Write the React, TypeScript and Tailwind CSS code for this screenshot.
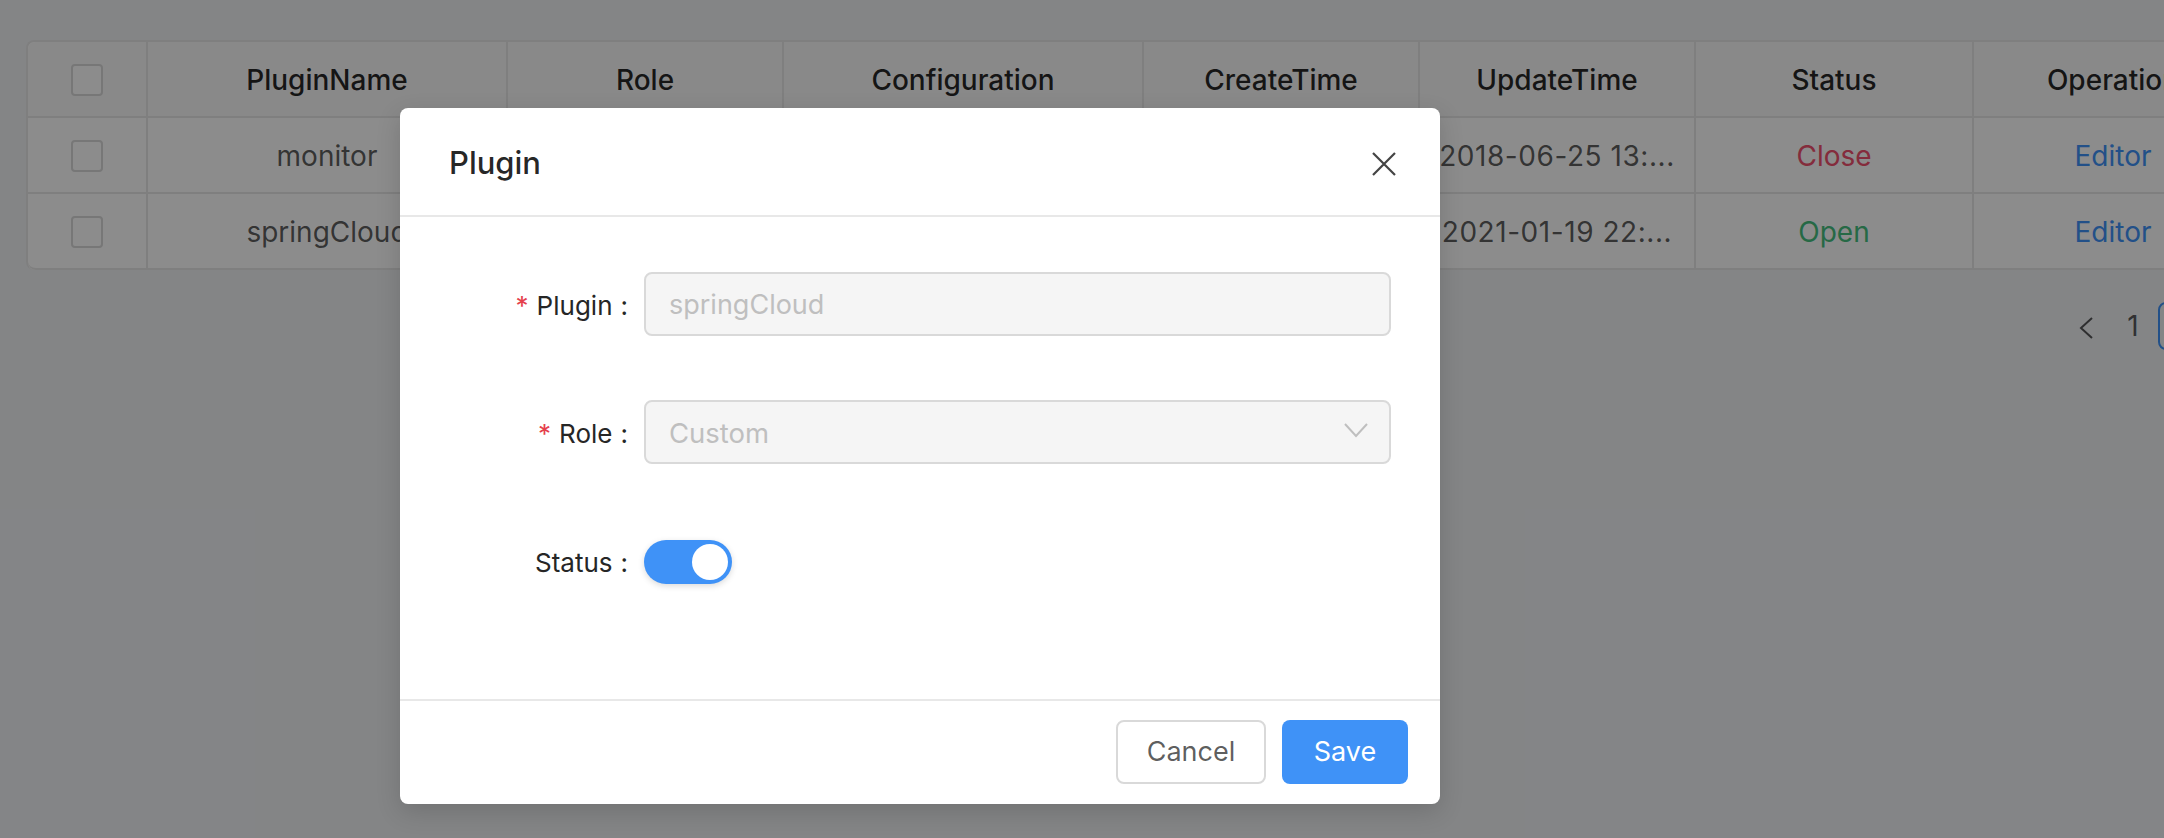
const font = { fontFamily: "Inter, 'Noto Sans', sans-serif" };

const rows = [
  {
    name: "monitor",
    role: "Custom",
    config: "{...}",
    created: "2018-06-25 13:...",
    updated: "2018-06-25 13:...",
    open: false,
  },
  {
    name: "springCloud",
    role: "Custom",
    config: "{...}",
    created: "2018-06-25 13:...",
    updated: "2021-01-19 22:...",
    open: true,
  },
];

function Checkbox() {
  return <span className="block size-8 mx-auto rounded-[4px] border-2 border-[#d9d9d9] bg-white" />;
}

function FormRow({ label, required, children }: { label: string; required?: boolean; children: React.ReactNode }) {
  return (
    <div className="flex items-center h-16">
      <label
        className={`w-[244px] flex justify-end items-center text-[26px] text-[#262626] shrink-0 ${required ? "pt-[3px]" : ""}`}
      >
        {required ? <span className="text-[#e5404c] mr-2">*</span> : null}
        {label}
        <span className="ml-2 mr-4">:</span>
      </label>
      {children}
    </div>
  );
}

export default function App() {
  return (
    <div className="relative w-[2164px] h-[838px] overflow-hidden bg-[#f0f2f5]" style={font}>
      <div className="pt-10 pl-[26px]">
        <table className="w-[2227px] table-fixed border-separate border-spacing-0 bg-white rounded-lg text-[28px] text-black/65 border-t-2 border-l-2 border-[#e8e8e8]">
          <colgroup>
            <col className="w-[120px]" />
            <col className="w-[360px]" />
            <col className="w-[276px]" />
            <col className="w-[360px]" />
            <col className="w-[276px]" />
            <col className="w-[276px]" />
            <col className="w-[278px]" />
            <col className="w-[280px]" />
          </colgroup>
          <thead>
            <tr className="h-[76px] bg-[#fafafa] text-black/85">
              <th className="rounded-tl-lg pt-[2px] border-r-2 border-b-2 border-[#e8e8e8]">
                <Checkbox />
              </th>
              {["PluginName", "Role", "Configuration", "CreateTime", "UpdateTime", "Status", "Operation"].map((h) => (
                <th key={h} className="font-medium pt-[2px] whitespace-nowrap border-r-2 border-b-2 border-[#e8e8e8]">
                  {h}
                </th>
              ))}
            </tr>
          </thead>
          <tbody>
            {rows.map((r, i) => (
              <tr key={r.name} className="h-[76px] text-center">
                <td className={`pt-[2px] border-r-2 border-b-2 border-[#e8e8e8] ${i === 1 ? "rounded-bl-lg" : ""}`}>
                  <Checkbox />
                </td>
                <td className="pt-[2px] border-r-2 border-b-2 border-[#e8e8e8]">{r.name}</td>
                <td className="pt-[2px] border-r-2 border-b-2 border-[#e8e8e8]">{r.role}</td>
                <td className="pt-[2px] border-r-2 border-b-2 border-[#e8e8e8]">{r.config}</td>
                <td className="pt-[2px] tracking-[0.55px] border-r-2 border-b-2 border-[#e8e8e8]">{r.created}</td>
                <td className="pt-[2px] tracking-[0.55px] whitespace-nowrap border-r-2 border-b-2 border-[#e8e8e8]">
                  {r.updated}
                </td>
                <td
                  className={`pt-[2px] border-r-2 border-b-2 border-[#e8e8e8] ${r.open ? "text-[#45c07f]" : "text-[#f0506e]"}`}
                >
                  {r.open ? "Open" : "Close"}
                </td>
                <td className="pt-[2px] border-r-2 border-b-2 border-[#e8e8e8] text-[#3f92f7]">Editor</td>
              </tr>
            ))}
          </tbody>
        </table>
        <div className="flex items-center mt-8 ml-[2053px] text-[28px] text-black/65">
          <svg width="14" height="22" viewBox="0 0 14 22" className="shrink-0 mt-1">
            <path d="M13 1 L2 11 L13 21" stroke="currentColor" strokeWidth="2" fill="none" />
          </svg>
          <span className="ml-[30px] w-5 shrink-0 text-center">1</span>
          <span className="ml-[15px] h-12 w-12 shrink-0 rounded-lg border-2 border-[#3f92f7]" />
        </div>
      </div>

      <div className="absolute inset-0 bg-black/45" />

      <div className="absolute left-[400px] top-[108px] w-[1040px] h-[696px] flex flex-col bg-white rounded-lg shadow-[0_8px_24px_rgba(0,0,0,0.15)]">
        <div className="h-[109px] shrink-0 flex items-center justify-between pt-1 pl-[49px] pr-[44px] border-b-2 border-[#e8e8e8]">
          <span className="text-[31px] font-medium text-black/85">Plugin</span>
          <svg width="24" height="24" viewBox="0 0 24 24" className="text-[#444]">
            <path d="M1 1 L23 23 M23 1 L1 23" stroke="currentColor" strokeWidth="2.2" fill="none" />
          </svg>
        </div>
        <div className="flex-1 flex flex-col pt-[55px]">
          <FormRow label="Plugin" required>
            <div className="w-[747px] h-16 flex items-center pl-[23px] pt-[3px] rounded-lg border-2 border-[#d9d9d9] bg-[#f5f5f5] text-[27px] text-[#bfbfbf]">
              springCloud
            </div>
          </FormRow>
          <div className="mt-16">
            <FormRow label="Role" required>
              <div className="w-[747px] h-16 flex items-center justify-between pl-[23px] pr-[21px] rounded-lg border-2 border-[#d9d9d9] bg-[#f5f5f5] text-[27.5px] text-[#bfbfbf]">
                <span className="pt-[3px]">Custom</span>
                <svg width="24" height="15" viewBox="0 0 24 15" className="mb-[3px]">
                  <path d="M1 1 L12 13 L23 1" stroke="currentColor" strokeWidth="2" fill="none" />
                </svg>
              </div>
            </FormRow>
          </div>
          <div className="mt-[66px]">
            <FormRow label="Status">
              <span className="flex justify-end items-center w-[88px] h-11 p-1 rounded-full bg-[#3f92f7] shadow-[0_2px_6px_rgba(0,0,0,0.15)]">
                <span className="block size-9 rounded-full bg-white" />
              </span>
            </FormRow>
          </div>
        </div>
        <div className="h-[105px] shrink-0 flex items-center justify-end gap-4 pr-8 pb-[1px] border-t-2 border-[#e8e8e8]">
          <button className="h-16 w-[150px] rounded-lg border-2 border-[#d9d9d9] bg-white text-[27px] text-black/65">
            Cancel
          </button>
          <button className="h-16 w-[126px] rounded-lg bg-[#3f92f7] text-[27px] text-white">Save</button>
        </div>
      </div>
    </div>
  );
}
